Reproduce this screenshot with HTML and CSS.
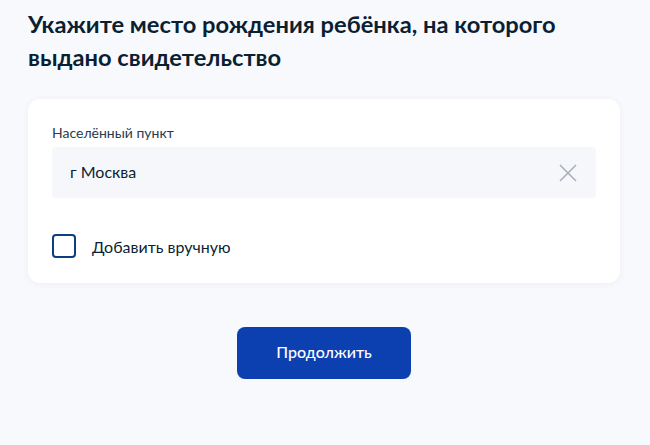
FILE: index.html
```html
<!DOCTYPE html>
<html lang="ru">
<head>
<meta charset="utf-8">
<link rel="stylesheet" href="styles.css">
</head>
<body>
<main class="page">
  <h1 class="title">Укажите место рождения ребёнка, на которого выдано свидетельство</h1>
  <section class="card">
    <div class="label">Населённый пункт</div>
    <div class="input">
      <span class="value">г Москва</span>
      <svg class="clear" width="20" height="20" viewBox="0 0 20 20"><path d="M2 2 L18 18 M18 2 L2 18" stroke="#a9b0bb" stroke-width="1.6" fill="none"/></svg>
    </div>
    <label class="check">
      <span class="box"></span>
      <span class="check-text">Добавить вручную</span>
    </label>
  </section>
  <div class="actions">
    <button class="btn">Продолжить</button>
  </div>
</main>
</body>
</html>
```
FILE: styles.css
```css
html, body { margin: 0; padding: 0; }
body {
  background: #f8f9fc;
  font-family: Lato, "Noto Sans", sans-serif;
  color: #0b1f33;
  width: 650px;
  height: 445px;
  overflow: hidden;
}
.page {
  padding: 8px 30px 0 28px;
}
.title {
  margin: 0;
  font-size: 23.7px;
  line-height: 33px;
  font-weight: 700;
  color: #0b1f33;
  width: 560px;
}
.card {
  margin-top: 25px;
  width: 544px;
  background: #fff;
  border-radius: 12px;
  box-shadow: 0 1px 6px rgba(40, 60, 110, 0.06);
  padding: 24px 24px 25px 24px;
}
.label {
  font-size: 14px;
  line-height: 20px;
  color: #2a3b4d;
  margin-bottom: 4px;
}
.input {
  height: 51px;
  box-sizing: border-box;
  background: #f5f7fa;
  border-radius: 4px;
  display: flex;
  align-items: center;
  justify-content: space-between;
  padding: 0 18px 3px 18px;
}
.value {
  font-size: 16px;
  color: #0b1f33;
}
.clear { display: block; margin-top: 3px; }
.check {
  display: flex;
  align-items: center;
  gap: 16px;
  margin-top: 36px;
}
.box {
  width: 20px;
  height: 20px;
  border: 2px solid #0b3f7e;
  border-radius: 4px;
}
.check-text {
  font-size: 16px;
  color: #0b1f33;
}
.actions {
  display: flex;
  justify-content: center;
  margin-top: 44px;
}
.btn {
  width: 174px;
  height: 52px;
  box-sizing: border-box;
  padding: 0 0 3px 0;
  border: none;
  border-radius: 8px;
  background: #0c40b0;
  color: #fff;
  font-family: Lato, "Noto Sans", sans-serif;
  font-size: 16px;
  font-weight: 500;
}
```
